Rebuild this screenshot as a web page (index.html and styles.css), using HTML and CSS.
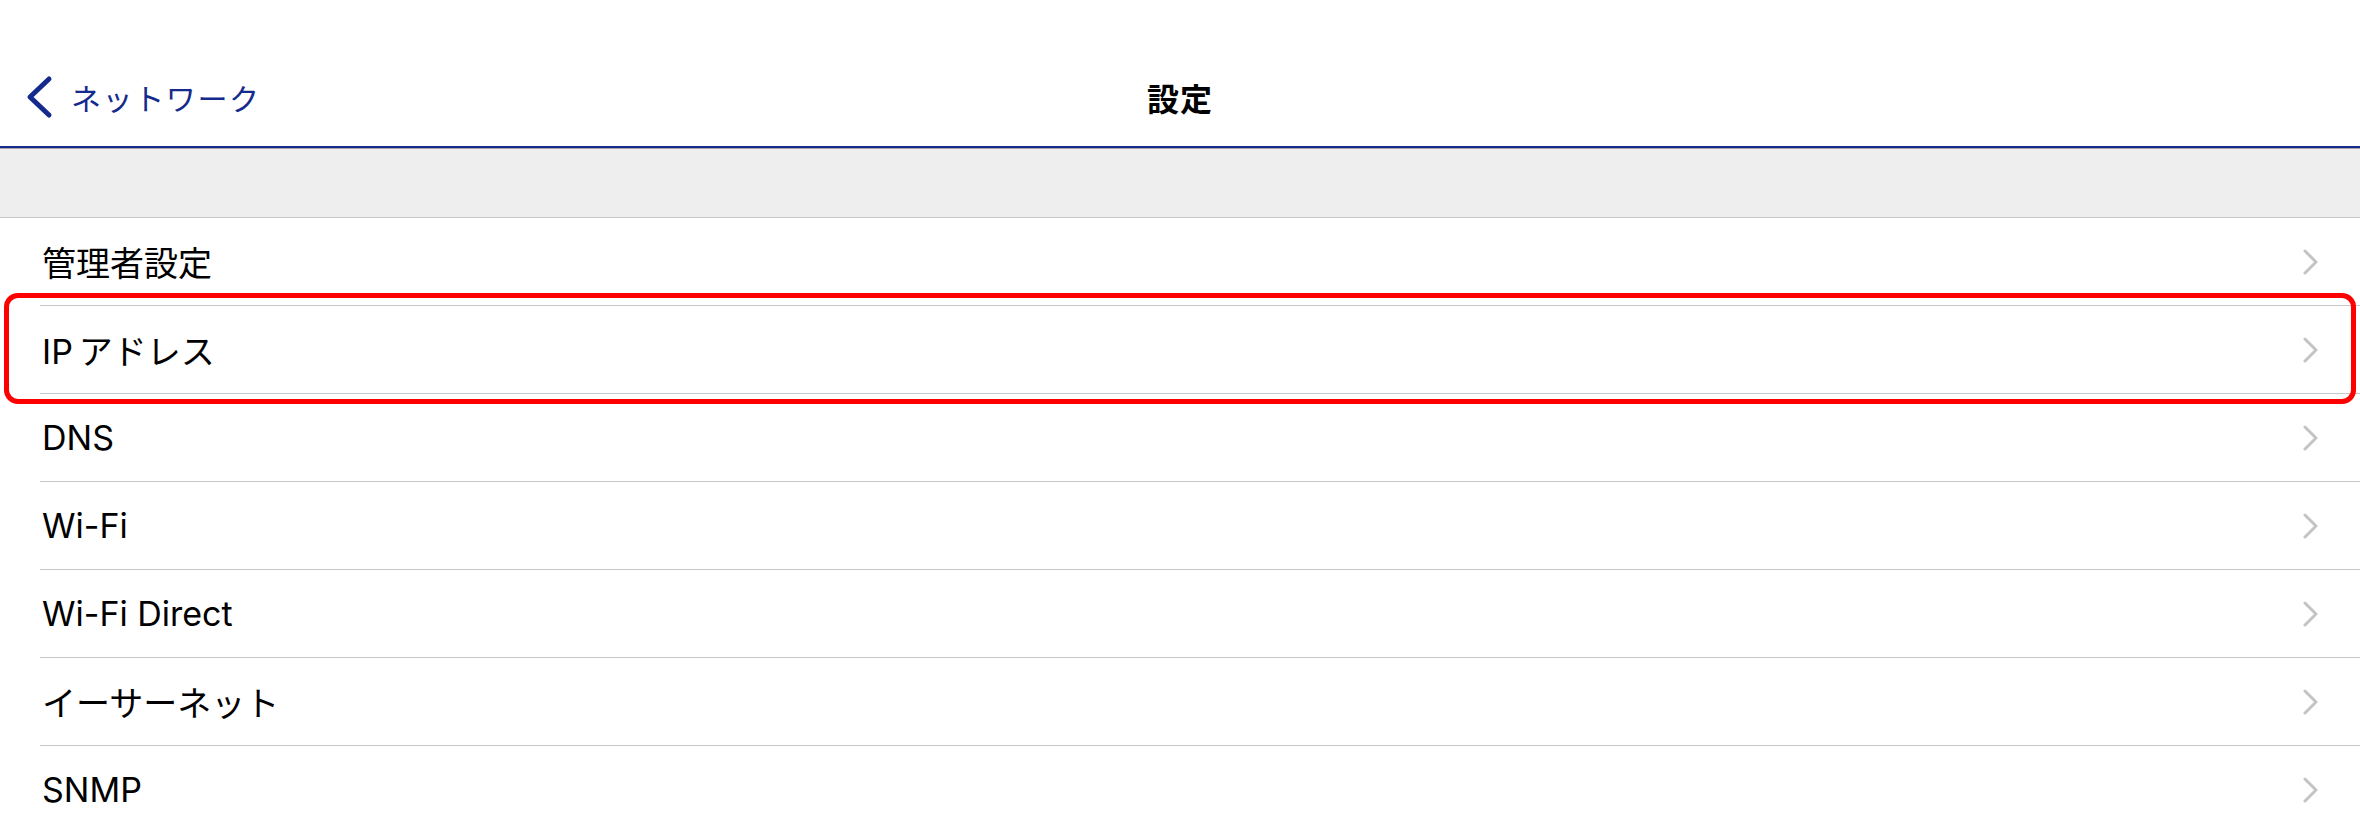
FILE: index.html
```html
<!DOCTYPE html>
<html lang="ja">
<head>
<meta charset="UTF-8">
<meta name="viewport" content="width=device-width, initial-scale=1.0">
<title>設定</title>
<link rel="stylesheet" href="styles.css">
</head>
<body>

<header class="navbar">
  <a class="back" href="#">
    <svg class="back-icon" width="30" height="44" viewBox="0 0 30 44">
      <path d="M25 4 L6 22 L25 40" fill="none" stroke="currentColor" stroke-width="5" stroke-linecap="round" stroke-linejoin="round"/>
    </svg>
    <span>ネットワーク</span>
  </a>
  <h1 class="title">設定</h1>
  <div></div>
</header>

<div class="gap"></div>

<ul class="list">
  <li class="row"><span>管理者設定</span><svg class="chev" viewBox="0 0 18 26"><path d="M3 2 L14 13 L3 24"/></svg></li>
  <li class="row marked"><span>IP<span class="sp">アドレス</span></span><svg class="chev" viewBox="0 0 18 26"><path d="M3 2 L14 13 L3 24"/></svg></li>
  <li class="row"><span>DNS</span><svg class="chev" viewBox="0 0 18 26"><path d="M3 2 L14 13 L3 24"/></svg></li>
  <li class="row"><span>Wi-Fi</span><svg class="chev" viewBox="0 0 18 26"><path d="M3 2 L14 13 L3 24"/></svg></li>
  <li class="row"><span>Wi-Fi Direct</span><svg class="chev" viewBox="0 0 18 26"><path d="M3 2 L14 13 L3 24"/></svg></li>
  <li class="row"><span>イーサーネット</span><svg class="chev" viewBox="0 0 18 26"><path d="M3 2 L14 13 L3 24"/></svg></li>
  <li class="row"><span>SNMP</span><svg class="chev" viewBox="0 0 18 26"><path d="M3 2 L14 13 L3 24"/></svg></li>
</ul>

</body>
</html>
```

FILE: styles.css
```css
body {
    margin: 0;
    background: #fff;
    color: #000;
    font-family: Inter, "Noto Sans CJK JP", sans-serif;
    overflow: hidden;
}

.navbar {
    display: grid;
    grid-template-columns: 1fr auto 1fr;
    align-items: center;
    height: 146px;
    border-bottom: 2px solid #142a8c;
    box-sizing: content-box;
}

.back {
    display: flex;
    align-items: center;
    gap: 17px;
    padding-left: 24px;
    padding-top: 48px;
    color: #142a8c;
    text-decoration: none;
    font-size: 30px;
    letter-spacing: 1.6px;
}

.title {
    margin: 0;
    padding-top: 48px;
    font-size: 32px;
    font-weight: 700;
    letter-spacing: 1px;
}

.gap {
    height: 68px;
    background: #eeeeee;
    border-top: 1px solid #a6a6a6;
    border-bottom: 1px solid #c8c7cc;
}

.list {
    list-style: none;
    margin: 0;
    padding: 0;
}

.row {
    position: relative;
    display: flex;
    align-items: center;
    justify-content: space-between;
    height: 87px;
    padding: 0 40px 0 42px;
    font-size: 34px;
}

.row::after {
    content: "";
    position: absolute;
    left: 40px;
    right: 0;
    bottom: -1px;
    height: 1px;
    background: #c8c7cc;
}

.row + .row {
    margin-top: 1px;
}

.sp {
    margin-left: 6px;
}

.chev {
    width: 18px;
    height: 26px;
    fill: none;
    stroke: #c4c4c7;
    stroke-width: 3;
    stroke-linecap: round;
    stroke-linejoin: round;
}

.marked::before {
    content: "";
    position: absolute;
    top: -13px;
    bottom: -11px;
    left: 4px;
    right: 4px;
    border: 5px solid #ff0000;
    border-radius: 14px;
    z-index: 1;
}
```
